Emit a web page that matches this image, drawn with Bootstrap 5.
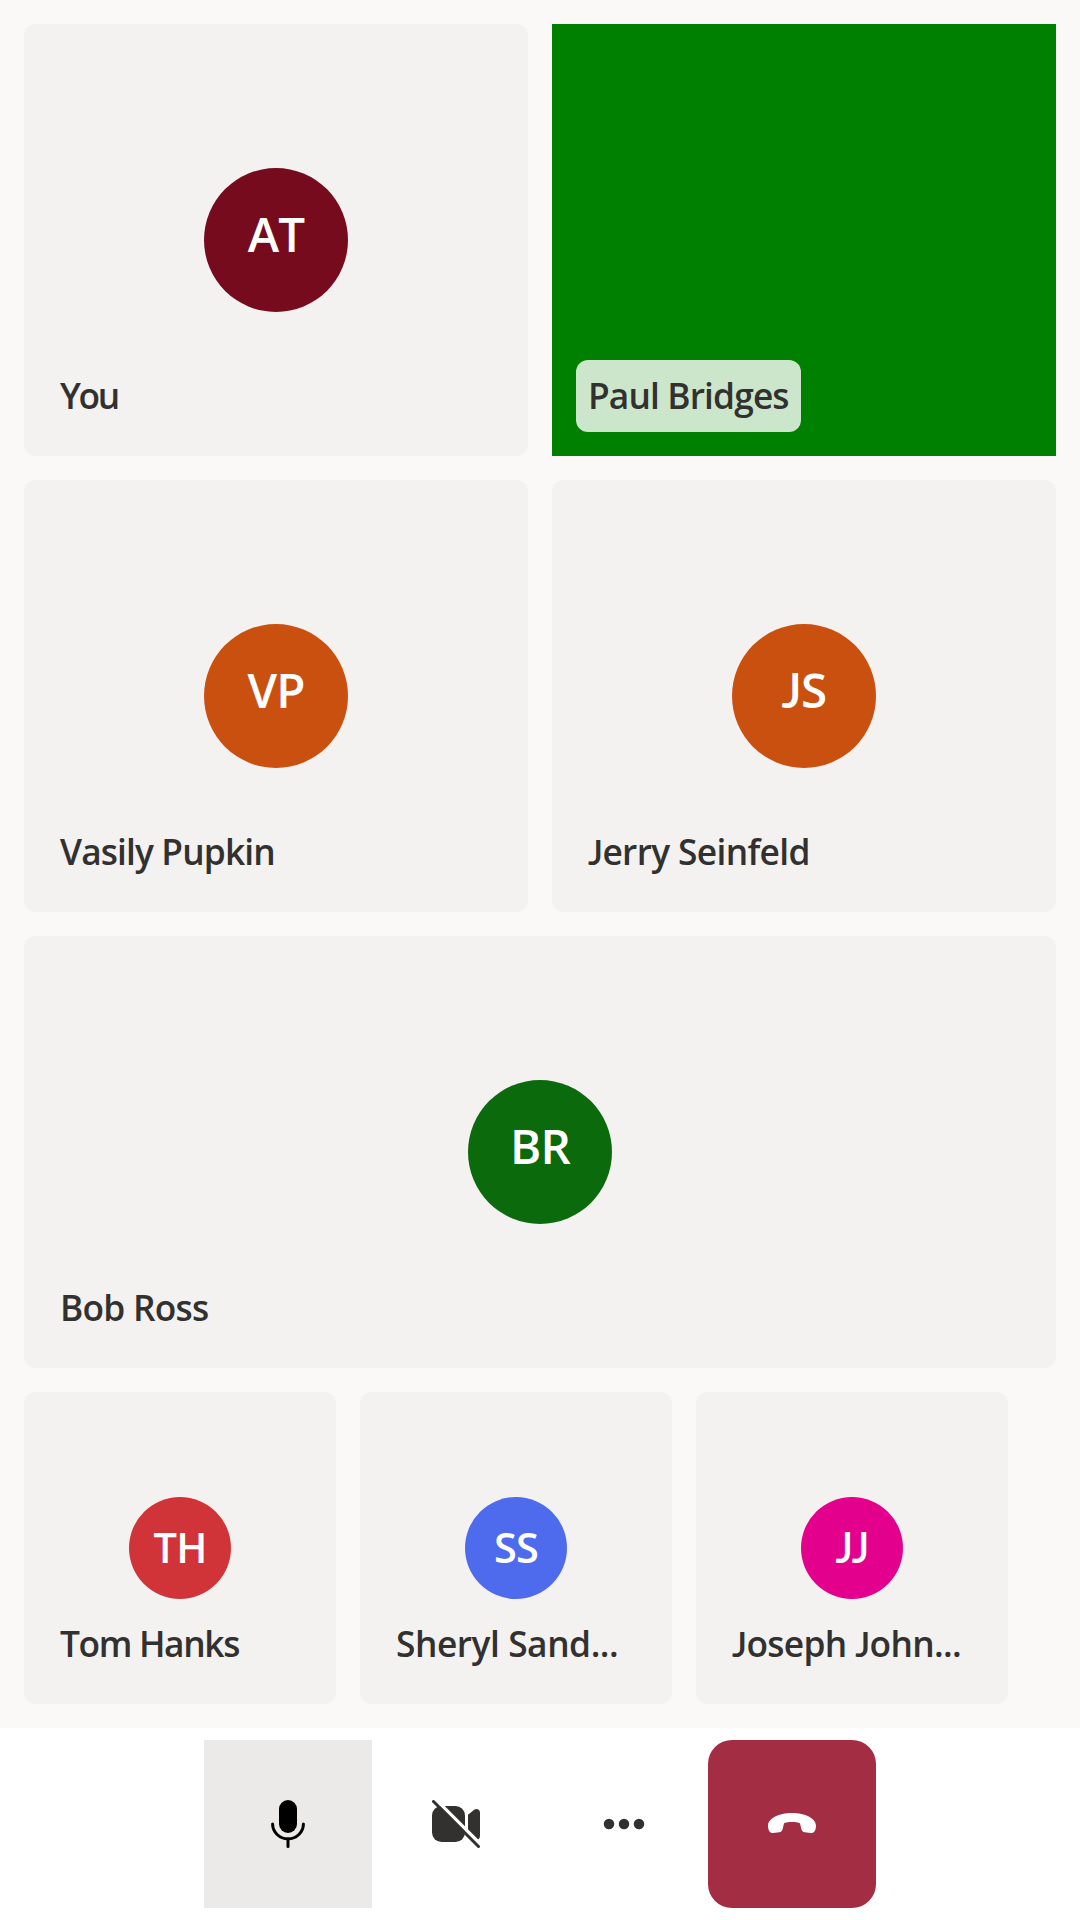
<!DOCTYPE html>
<html lang="en">
<head>
<meta charset="utf-8">
<meta name="viewport" content="width=device-width, initial-scale=1">
<title>Group call</title>
<link href="https://cdn.jsdelivr.net/npm/bootstrap@5.3.0/dist/css/bootstrap.min.css" rel="stylesheet">
<style>
  body { background: #faf9f8; color: #323130; font-family: "Open Sans", "Noto Sans", sans-serif; font-weight: 600; }
  .call-screen { height: 1920px; }
  .gallery { padding: 24px; gap: 24px; }
  .tile-row { gap: 24px; }
  .tile { background: #f3f2f1; border-radius: 12px; height: 432px; }
  .tile-video { background: #008000; border-radius: 0; }
  .tile-small { width: 312px; height: 312px; }
  .avatar { width: 144px; height: 144px; font-size: 47.5px; line-height: 1; padding-bottom: 12px; letter-spacing: -.8px; }
  .tile-small .avatar { width: 102px; height: 102px; font-size: 41.5px; padding-bottom: 0; }
  .name-tag { left: 24px; bottom: 24px; height: 72px; padding: 0 12px; border-radius: 12px; font-size: 35.3px; line-height: 70px; white-space: nowrap; letter-spacing: -.65px; }
  .tile-video .name-tag { background: rgba(255, 255, 255, .8); }
  /* Capital J that sits on the baseline */
  .cap-j { font-family: Lato, "Open Sans", sans-serif; }
  .track-you { letter-spacing: -2.3px; }
  .track-tight { letter-spacing: -.86px; }
  .track-bob { letter-spacing: -.76px; }
  .track-tom { letter-spacing: -1.35px; }
  .track-sheryl { letter-spacing: -.45px; }
  .call-bar { height: 192px; }
  .call-btn { width: 168px; height: 168px; border: 0; border-radius: 0; color: #323130; background: transparent; }
  .call-btn-mic { background: #ebeae8; color: #000; }
  .call-btn-end { background: #a32d42; color: #fff; border-radius: 24px; }
</style>
<script src="https://cdn.jsdelivr.net/npm/bootstrap@5.3.0/dist/js/bootstrap.bundle.min.js"></script>
</head>
<body>
<div class="call-screen d-flex flex-column overflow-hidden">
  <main class="gallery d-flex flex-column flex-grow-1">
    <div class="tile-row d-flex">
      <div class="tile position-relative d-flex align-items-center justify-content-center w-50">
        <div class="avatar rounded-circle d-flex align-items-center justify-content-center text-white" style="background:#750b1c">AT</div>
        <div class="name-tag track-you position-absolute">You</div>
      </div>
      <div class="tile tile-video position-relative w-50">
        <div class="name-tag track-tight position-absolute">Paul Bridges</div>
      </div>
    </div>
    <div class="tile-row d-flex">
      <div class="tile position-relative d-flex align-items-center justify-content-center w-50">
        <div class="avatar rounded-circle d-flex align-items-center justify-content-center text-white" style="background:#ca5010">VP</div>
        <div class="name-tag track-tight position-absolute">Vasily Pupkin</div>
      </div>
      <div class="tile position-relative d-flex align-items-center justify-content-center w-50">
        <div class="avatar rounded-circle d-flex align-items-center justify-content-center text-white" style="background:#ca5010"><span class="cap-j">J</span>S</div>
        <div class="name-tag position-absolute"><span class="cap-j">J</span>erry Seinfeld</div>
      </div>
    </div>
    <div class="tile position-relative d-flex align-items-center justify-content-center">
      <div class="avatar rounded-circle d-flex align-items-center justify-content-center text-white" style="background:#0b6a0b">BR</div>
      <div class="name-tag track-bob position-absolute">Bob Ross</div>
    </div>
    <div class="tile-row d-flex">
      <div class="tile tile-small position-relative d-flex align-items-center justify-content-center">
        <div class="avatar rounded-circle d-flex align-items-center justify-content-center text-white" style="background:#d13438">TH</div>
        <div class="name-tag track-tom position-absolute">Tom Hanks</div>
      </div>
      <div class="tile tile-small position-relative d-flex align-items-center justify-content-center">
        <div class="avatar rounded-circle d-flex align-items-center justify-content-center text-white" style="background:#4f6bed">SS</div>
        <div class="name-tag track-sheryl position-absolute">Sheryl Sand...</div>
      </div>
      <div class="tile tile-small position-relative d-flex align-items-center justify-content-center">
        <div class="avatar rounded-circle d-flex align-items-center justify-content-center text-white" style="background:#e3008c"><span class="cap-j">JJ</span></div>
        <div class="name-tag position-absolute"><span class="cap-j">J</span>oseph <span class="cap-j">J</span>ohn...</div>
      </div>
    </div>
  </main>
  <footer class="call-bar bg-white d-flex align-items-center justify-content-center flex-shrink-0">
    <button type="button" class="btn call-btn call-btn-mic p-0 d-flex align-items-center justify-content-center" aria-label="Mute">
      <svg width="48" height="48" viewBox="0 0 48 48" fill="none" stroke="currentColor" stroke-width="3" stroke-linecap="round">
        <rect x="15" y="0" width="18" height="33" rx="9" fill="currentColor" stroke="none"/>
        <path d="M8.6 24A15.4 14.8 0 0 0 39.4 24"/>
        <path d="M24 39.5V46.5"/>
      </svg>
    </button>
    <button type="button" class="btn call-btn p-0 d-flex align-items-center justify-content-center" aria-label="Turn camera on">
      <svg width="48" height="48" viewBox="0 0 48 48" fill="currentColor">
        <rect x="0" y="6" width="33" height="36" rx="9.5"/>
        <path d="M36 14.8L42.2 9.8C44.6 8 48 9.6 48 12.6V35.4C48 38.4 46.5 39.5 45 39.5L36 33Z"/>
        <path d="M3.2 -1.1L46.5 42.2" stroke="#fff" stroke-width="3.4"/>
        <path d="M1.5 1.5L46.5 46.5" stroke="currentColor" stroke-width="3" stroke-linecap="round"/>
      </svg>
    </button>
    <button type="button" class="btn call-btn p-0 d-flex align-items-center justify-content-center" aria-label="More options">
      <svg width="48" height="48" viewBox="0 0 48 48" fill="currentColor">
        <circle cx="9" cy="24" r="5.25"/><circle cx="24" cy="24" r="5.25"/><circle cx="39" cy="24" r="5.25"/>
      </svg>
    </button>
    <button type="button" class="btn call-btn call-btn-end p-0 d-flex align-items-center justify-content-center" aria-label="Hang up">
      <svg width="48" height="48" viewBox="0 0 48 48" fill="currentColor">
        <path d="M24 13C37 13 48 18.3 48 25.5C48 30.5 46 33.2 43 33L36.500 32.300C34.500 32 33.700 30.500 33.200 28.500L32 23.300C28.500 21.400 19.500 21.400 16 23.300L14.800 28.500C14.300 30.500 13.500 32 11.500 32.300L5 33C2 33.200 0 30.500 0 25.500C0 18.300 11 13 24 13Z"/>
      </svg>
    </button>
  </footer>
</div>
</body>
</html>
